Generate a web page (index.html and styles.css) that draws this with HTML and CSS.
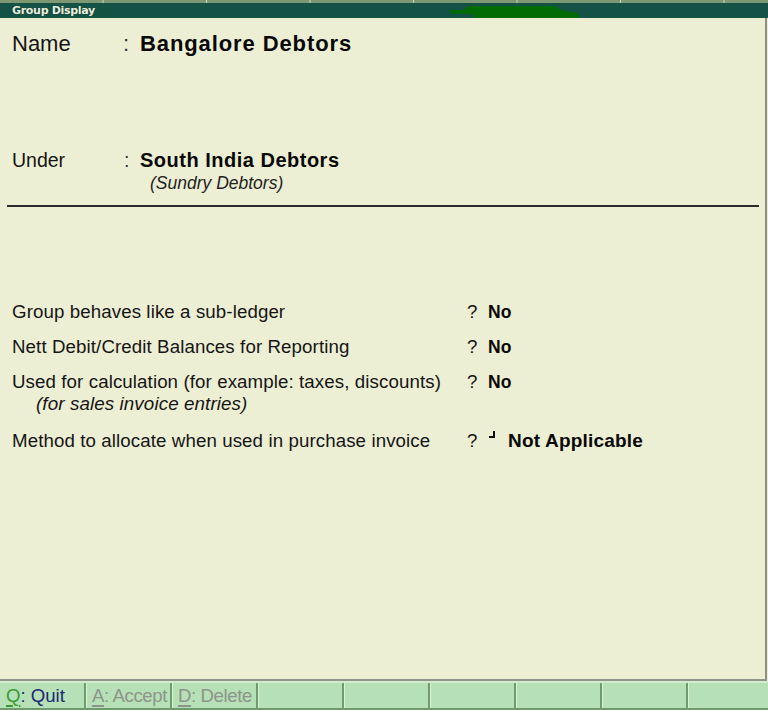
FILE: index.html
```html
<!DOCTYPE html>
<html>
<head>
<meta charset="utf-8">
<link rel="stylesheet" href="styles.css">
</head>
<body>
<div class="screen">
  <div class="topstrip"></div>
  <div class="titlebar">
    <span class="title">Group Display</span>
    <svg class="blob" width="130" height="13" viewBox="0 0 130 13"><path d="M0 4 L14 4 L15 2 L18 0.5 L21 0 L105 0 L108 2 L111 4 L116 5 L122 6 L129 8 L129 12 L23 12 L23 8.5 L18 8 L14 7.7 L0 7.7 Z" fill="#036b03"/></svg>
  </div>
  <div class="main">
    <div class="field field-name">
      <span class="flabel">Name</span><span class="colon">:</span><span class="fval">Bangalore Debtors</span>
    </div>
    <div class="field field-under">
      <span class="flabel">Under</span><span class="colon">:</span><span class="fval">South India Debtors</span>
    </div>
    <div class="sub">(Sundry Debtors)</div>
    <div class="rule"></div>
    <div class="opts">
      <div class="opt">
        <span class="olabel">Group behaves like a sub-ledger</span><span class="q">?</span><span class="oval">No</span>
      </div>
      <div class="opt">
        <span class="olabel">Nett Debit/Credit Balances for Reporting</span><span class="q">?</span><span class="oval">No</span>
      </div>
      <div class="opt">
        <div class="olabel">Used for calculation (for example: taxes, discounts)<div class="note">(for sales invoice entries)</div></div><span class="q">?</span><span class="oval">No</span>
      </div>
      <div class="opt opt-method">
        <span class="olabel">Method to allocate when used in purchase invoice</span><span class="q">?</span><span class="enter"></span><span class="oval oval-big">Not Applicable</span>
      </div>
    </div>
  </div>
  <div class="btnbar">
    <div class="btn"><span class="key key-on">Q</span><span class="btxt-on">: Quit</span></div>
    <div class="btn btn-off"><span class="key">A</span>: Accept</div>
    <div class="btn btn-off"><span class="key">D</span>: Delete</div>
    <div class="btn"></div>
    <div class="btn"></div>
    <div class="btn"></div>
    <div class="btn"></div>
    <div class="btn"></div>
    <div class="btn btn-last"></div>
  </div>
</div>
</body>
</html>
```
FILE: styles.css
```css
html, body {
  margin: 0;
  padding: 0;
}
body {
  width: 768px;
  height: 710px;
  overflow: hidden;
  background: #edefd4;
  font-family: "Liberation Sans", Arial, sans-serif;
  color: #151515;
}
.screen {
  width: 768px;
  height: 710px;
  display: flex;
  flex-direction: column;
}
.topstrip {
  height: 3px;
  flex: 0 0 3px;
  background-color: #7d9872;
  background-image: repeating-linear-gradient(to right, transparent 0 103px, #cdd6c4 103px 104px, transparent 104px 103.5px);
  background-size: 103.5px 3px;
}
.titlebar {
  position: relative;
  height: 15px;
  flex: 0 0 15px;
  background: #145246;
  display: flex;
  align-items: center;
}
.title {
  margin-left: 12px;
  font-family: "DejaVu Sans", sans-serif;
  font-weight: bold;
  font-size: 11px;
  letter-spacing: -0.3px;
  line-height: 15px;
  color: #e9eedc;
  text-shadow: -1px 0 0 #0c3a31;
}
.blob {
  position: absolute;
  left: 450px;
  top: 3px;
}
.main {
  flex: 1;
  box-sizing: border-box;
  margin-right: 1px;
  border-right: 2px solid #8d8f86;
  border-bottom: 2px solid #8e968c;
  display: flex;
  flex-direction: column;
}
.field {
  display: flex;
  align-items: baseline;
  padding-left: 12px;
}
.field-name {
  margin-top: 13px;
  font-size: 22px;
  line-height: 26px;
}
.field-name .flabel { width: 111px; }
.field-name .colon { width: 17px; }
.field-name .fval {
  font-weight: bold;
  letter-spacing: 0.9px;
  color: #080808;
}
.field-under {
  margin-top: 91px;
  font-size: 19.5px;
  line-height: 24px;
}
.field-under .flabel { width: 112px; }
.field-under .colon { width: 16px; }
.field-under .fval {
  font-size: 20px;
  font-weight: bold;
  letter-spacing: 0.5px;
  color: #080808;
}
.colon {
  color: #333;
}
.sub {
  margin-top: 1px;
  padding-left: 150px;
  font-size: 17.5px;
  line-height: 20px;
  font-style: italic;
  color: #222;
}
.rule {
  margin: 12px 6px 0 7px;
  height: 2px;
  background: #2c2c2c;
}
.opts {
  margin-top: 94px;
  display: flex;
  flex-direction: column;
  gap: 13px;
  padding-left: 12px;
}
.opt {
  display: flex;
  align-items: baseline;
  font-size: 18.7px;
  line-height: 22px;
  letter-spacing: 0.1px;
}
.opt-method {
  margin-top: 2px;
}
.olabel {
  width: 455px;
  flex: 0 0 455px;
  white-space: nowrap;
}
.note {
  padding-left: 24px;
  font-style: italic;
  font-size: 18.8px;
}
.q {
  width: 21px;
  flex: 0 0 21px;
}
.oval {
  font-weight: bold;
  font-size: 17.5px;
  letter-spacing: 0;
  color: #080808;
}
.oval-big {
  font-size: 19px;
  letter-spacing: 0.2px;
}
.enter {
  display: inline-block;
  box-sizing: border-box;
  width: 6px;
  height: 7px;
  margin-left: 1px;
  margin-right: 13px;
  border-right: 2px solid #111;
  border-bottom: 2px solid #111;
  position: relative;
  top: -9px;
}
.btnbar {
  flex: 0 0 29px;
  box-sizing: border-box;
  height: 29px;
  display: flex;
  background: #b6e0b5;
  border-top: 2px solid #d2ecce;
  border-bottom: 2px solid #6f9a6c;
}
.btn {
  box-sizing: border-box;
  flex: 0 0 86px;
  border-left: 1px solid #dcf2d8;
  border-right: 2px solid #6f9a6c;
  padding-left: 5px;
  font-size: 18.6px;
  line-height: 25px;
  white-space: nowrap;
  overflow: hidden;
}
.btn:first-child {
  border-left: 1px solid #b6e0b5;
}
.btn-last {
  flex: 1;
  border-right: none;
}
.key {
  text-decoration: underline;
  text-decoration-thickness: 2px;
  text-underline-offset: 3px;
}
.key-on {
  color: #3b9a36;
}
.btxt-on {
  color: #1c2776;
}
.btn-off {
  color: #8d958b;
  letter-spacing: -0.4px;
}
```
